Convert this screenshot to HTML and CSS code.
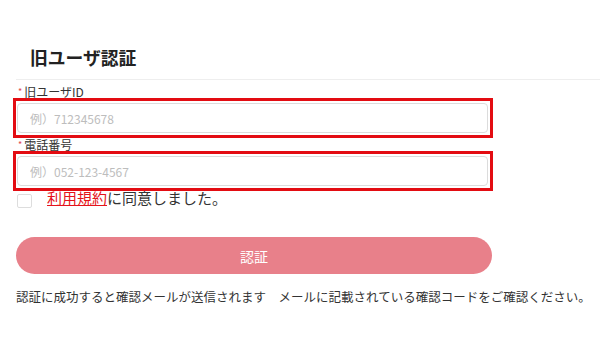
FILE: index.html
```html
<!DOCTYPE html>
<html lang="ja">
<head>
<meta charset="utf-8">
<title>旧ユーザ認証</title>
<link rel="stylesheet" href="styles.css">
</head>
<body>
<div class="page">
  <div class="header"><h1 class="title">旧ユーザ認証</h1></div>
  <form class="form">
    <label class="label"><span class="req">*</span>旧ユーザID</label>
    <div class="mark">
      <input class="input" type="text" placeholder="例）712345678">
    </div>
    <label class="label"><span class="req">*</span>電話番号</label>
    <div class="mark">
      <input class="input" type="text" placeholder="例）052-123-4567">
    </div>
    <div class="agree">
      <span class="check"></span>
      <span class="agree-text"><a class="link" href="#">利用規約</a>に同意しました。</span>
    </div>
    <button class="btn" type="button">認証</button>
    <p class="note">認証に成功すると確認メールが送信されます　メールに記載されている確認コードをご確認ください。</p>
  </form>
</div>
</body>
</html>
```
FILE: styles.css
```css
* { box-sizing: border-box; }
html, body { margin: 0; padding: 0; background: #fff; }
body {
  font-family: "Noto Sans CJK JP", "Noto Sans", sans-serif;
  color: #333;
}
.page { padding-left: 16px; }
.header {
  padding: 45px 0 10px 14px;
  border-bottom: 1px solid #eeeeee;
}
.title {
  margin: 0;
  font-size: 17.8px;
  line-height: 24px;
  font-weight: 700;
  color: #222;
}
.form {
  width: 477px;
  display: flex;
  flex-direction: column;
}
.label {
  display: block;
  font-size: 12px;
  line-height: 13px;
  height: 13px;
  margin-top: 5px;
  padding-left: 2px;
  color: #333;
}
.mark + .label { margin-top: 0; }
.req {
  color: #e0484f;
  font-size: 9px;
  margin-right: 2px;
  vertical-align: 2px;
}
.mark {
  margin-left: -3px;
  border: 3px solid #e30c12;
  padding: 2px 2px 2px 1px;
  width: 480px;
}
.input {
  display: block;
  width: 100%;
  height: 30px;
  border: 1px solid #dcdcdc;
  border-radius: 4px;
  padding: 0 12px;
  font-family: inherit;
  font-size: 12px;
  color: #333;
  background: #fff;
  outline: none;
}
.input::placeholder { color: #bdbdbd; }
.agree {
  display: flex;
  align-items: flex-start;
  gap: 15px;
  margin-top: -1px;
  padding-left: 1px;
}
.check {
  width: 15px;
  height: 14px;
  margin-top: 4px;
  border: 1px solid #dddddd;
  border-radius: 2px;
  background: #fff;
  flex: none;
}
.agree-text {
  font-size: 15px;
  line-height: 16px;
  color: #333;
}
.link {
  color: #e5131b;
  text-decoration: underline;
}
.btn {
  margin-top: 29px;
  height: 37px;
  width: 476px;
  border: none;
  border-radius: 19px;
  background: #e8808a;
  color: #fff;
  font-family: inherit;
  font-size: 14px;
  padding: 0;
}
.note {
  margin: 15px 0 0;
  width: 600px;
  font-size: 12.5px;
  line-height: 16px;
  color: #333;
  white-space: nowrap;
}
```
